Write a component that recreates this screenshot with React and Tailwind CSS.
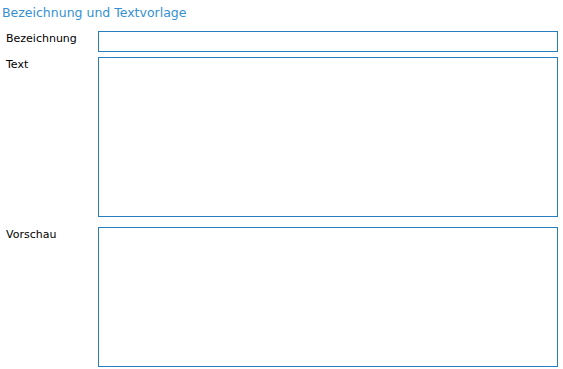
const Row = ({ label, children, className = "" }) => (
  <div className={`flex ${className}`}>
    <label className="w-[98px] shrink-0 pl-[6px] pt-0 text-[11px] leading-[15px] text-black">
      {label}
    </label>
    {children}
  </div>
);

export default function App() {
  return (
    <div className="w-[563px] h-[369px] bg-white font-['DejaVu_Sans',Verdana,sans-serif]">
      <h2 className="pl-[2px] pt-[5px] pb-[11px] text-[12.5px] leading-[15px] font-normal text-[#3590d3]">
        Bezeichnung und Textvorlage
      </h2>
      <Row label="Bezeichnung">
        <input
          type="text"
          className="w-[460px] h-[21px] border border-[#2a7dbd] bg-white outline-none px-1 text-[11px]"
        />
      </Row>
      <Row label="Text" className="mt-[5px]">
        <textarea className="w-[460px] h-[160px] border border-[#2a7dbd] bg-white outline-none resize-none p-1 text-[11px]" />
      </Row>
      <Row label="Vorschau" className="mt-[10px]">
        <div className="w-[460px] h-[140px] border border-[#2a7dbd] bg-white" />
      </Row>
    </div>
  );
}
